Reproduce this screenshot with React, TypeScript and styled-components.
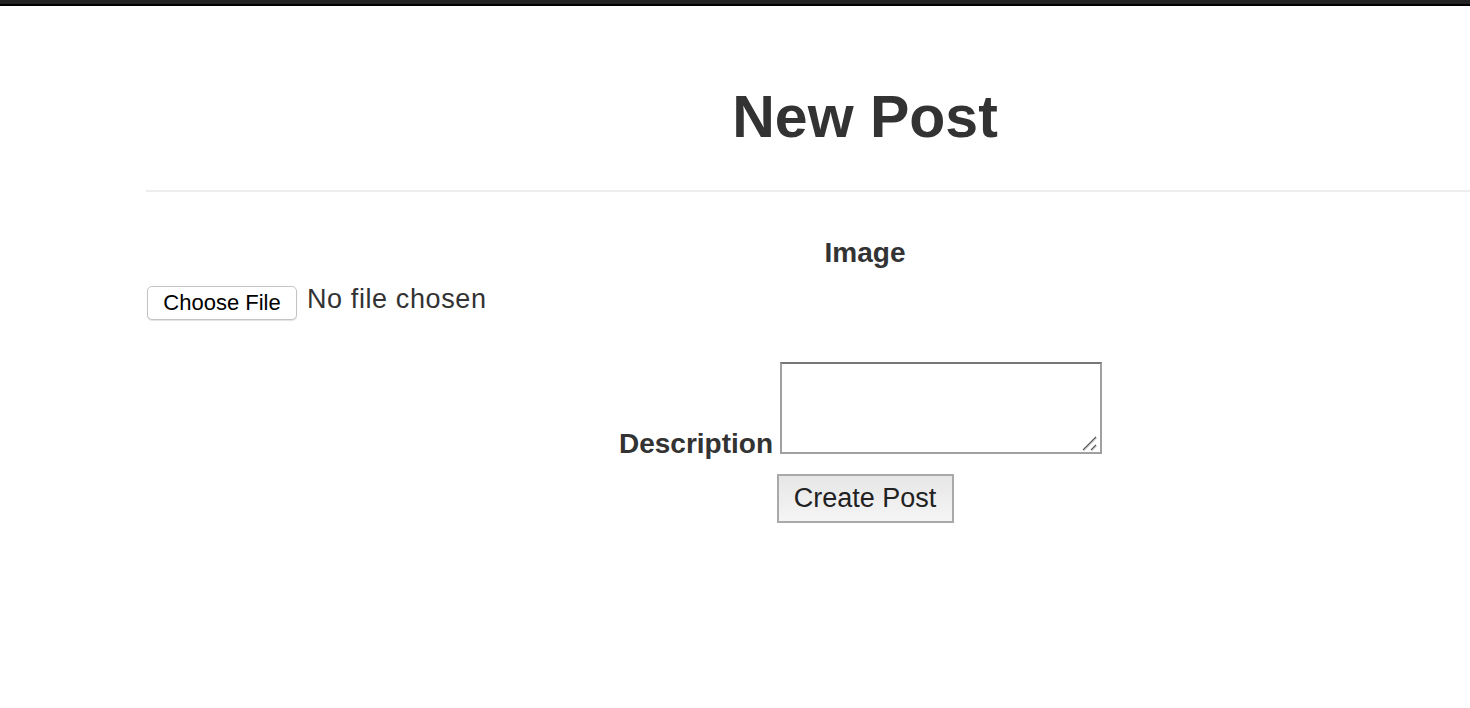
import React from "react";
import styled, { createGlobalStyle } from "styled-components";

const Global = createGlobalStyle`
  html, body {
    margin: 0;
    padding: 0;
    background: #ffffff;
    overflow: hidden;
  }
  body {
    font-family: "Liberation Sans", Arial, Helvetica, sans-serif;
    color: #333333;
  }
`;

const TopBar = styled.header`
  height: 4px;
  background: #232323;
  border-bottom: 2px solid #000000;
`;

const Main = styled.main`
  margin-left: 146px;
  width: 1438px;
  display: flex;
  flex-direction: column;
`;

const Title = styled.h1`
  margin: 82px 0 0;
  font-size: 59px;
  line-height: 58px;
  font-weight: 700;
  text-align: center;
  color: #333333;
`;

const Rule = styled.hr`
  margin: 44px 0 0;
  border: 0;
  height: 2px;
  background: #eeeeee;
`;

const Form = styled.form`
  display: flex;
  flex-direction: column;
`;

const Label = styled.label<{ $top?: number }>`
  display: block;
  margin-top: ${(p) => p.$top ?? 0}px;
  font-size: 28px;
  line-height: 28px;
  font-weight: 700;
  color: #333333;
  text-align: center;
`;

const FileRow = styled.div`
  display: flex;
  align-items: flex-start;
  gap: 10px;
  margin-top: 17px;
`;

const HiddenInput = styled.input`
  display: none;
`;

const FileButton = styled.label`
  box-sizing: border-box;
  width: 150px;
  height: 34px;
  margin-top: 2px;
  margin-left: 1px;
  display: flex;
  align-items: center;
  justify-content: center;
  background: #ffffff;
  border: 1px solid #c4c4c4;
  border-radius: 5px;
  box-shadow: 0 1px 1px rgba(0, 0, 0, 0.12);
  font-size: 22px;
  color: #000000;
  cursor: default;
`;

const FileStatus = styled.span`
  margin-top: 2px;
  font-size: 27px;
  line-height: 27px;
  letter-spacing: 0.6px;
  color: #333333;
`;

const DescRow = styled.div`
  display: flex;
  justify-content: center;
  align-items: flex-end;
  gap: 7px;
  margin-top: 42px;
  padding-right: 9px;
`;

const DescLabel = styled.label`
  font-size: 28px;
  line-height: 28px;
  font-weight: 700;
  color: #333333;
  margin-bottom: -4px;
`;

const AreaWrap = styled.div`
  position: relative;
  display: flex;
`;

const TextArea = styled.textarea`
  box-sizing: border-box;
  width: 322px;
  height: 92px;
  margin: 0;
  padding: 2px;
  border-width: 2px;
  border-style: solid;
  border-color: #777777 #a0a0a0 #a0a0a0 #a0a0a0;
  background: #ffffff;
  font-family: "Liberation Mono", monospace;
  font-size: 14px;
  resize: none;
  outline: none;
`;

const Grip = styled.svg`
  position: absolute;
  right: 2px;
  bottom: 2px;
  width: 18px;
  height: 16px;
  pointer-events: none;
`;

const SubmitRow = styled.div`
  display: flex;
  justify-content: center;
  margin-top: 20px;
`;

const Submit = styled.button`
  box-sizing: border-box;
  width: 177px;
  height: 49px;
  padding: 0;
  display: flex;
  align-items: center;
  justify-content: center;
  border: 2px solid #a9a9a9;
  border-radius: 0;
  background: linear-gradient(#e6e6e6, #f5f5f5);
  font-family: "Liberation Sans", Arial, Helvetica, sans-serif;
  font-size: 27px;
  color: #222222;
`;

export default function App() {
  return (
    <>
      <Global />
      <TopBar />
      <Main>
        <Title>New Post</Title>
        <Rule />
        <Form onSubmit={(e) => e.preventDefault()}>
          <Label $top={47} htmlFor="post-image">
            Image
          </Label>
          <FileRow>
            <HiddenInput id="post-image" type="file" />
            <FileButton htmlFor="post-image">Choose File</FileButton>
            <FileStatus>No file chosen</FileStatus>
          </FileRow>
          <DescRow>
            <DescLabel htmlFor="post-desc">Description</DescLabel>
            <AreaWrap>
              <TextArea id="post-desc" />
              <Grip viewBox="0 0 18 16">
                <line x1="1" y1="14" x2="14" y2="1" stroke="#555" strokeWidth="1.2" />
                <line x1="2" y1="15" x2="15" y2="2" stroke="#ccc" strokeWidth="0.8" />
                <line x1="9" y1="14" x2="14" y2="9" stroke="#555" strokeWidth="1.2" />
                <line x1="10" y1="15" x2="15" y2="10" stroke="#ccc" strokeWidth="0.8" />
              </Grip>
            </AreaWrap>
          </DescRow>
          <SubmitRow>
            <Submit type="submit">Create Post</Submit>
          </SubmitRow>
        </Form>
      </Main>
    </>
  );
}
